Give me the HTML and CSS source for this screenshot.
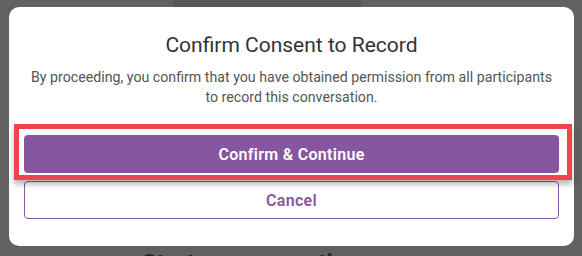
FILE: index.html
```html
<!DOCTYPE html>
<html>
<head>
<meta charset="utf-8">
<link rel="stylesheet" href="styles.css">
</head>
<body>
<div class="page">
  <div class="top-strip"><div class="top-card"></div></div>
  <h2 class="behind-heading">Start a conversation</h2>
</div>
<div class="dialog">
  <h1 class="title">Confirm Consent to Record</h1>
  <p class="message">By proceeding, you confirm that you have obtained permission from all participants to record this conversation.</p>
  <div class="actions">
    <button class="btn btn-primary">Confirm &amp; Continue</button>
    <button class="btn btn-outline">Cancel</button>
  </div>
  <div class="highlight"></div>
</div>
</body>
</html>
```
FILE: styles.css
```css
* { box-sizing: border-box; }
html, body {
  margin: 0;
  width: 582px;
  height: 256px;
  overflow: hidden;
  background: #616161;
  font-family: Roboto, "Liberation Sans", sans-serif;
}
.page {
  position: relative;
  height: 256px;
  overflow: hidden;
}
.top-strip {
  display: flex;
  padding-left: 173px;
}
.top-card {
  width: 188px;
  height: 8px;
  background: #59595d;
  border-bottom: 3px solid #555559;
}
.behind-heading {
  margin: 0;
  position: absolute;
  top: 248px;
  left: 142px;
  font-size: 24px;
  line-height: 30px;
  font-weight: 700;
  color: #2a2a2a;
  white-space: nowrap;
}
.dialog {
  position: absolute;
  left: 9px;
  top: 7px;
  width: 565px;
  height: 239px;
  background: #fff;
  border-radius: 10px;
  padding: 26px 15px 0;
  text-align: center;
}
.title {
  margin: 0;
  font-size: 21px;
  line-height: 24px;
  font-weight: 400;
  color: #333;
}
.message {
  margin: 10px auto 0;
  max-width: 528px;
  font-size: 14.2px;
  line-height: 20px;
  color: #555;
}
.actions {
  margin-top: 28px;
  display: flex;
  flex-direction: column;
  gap: 8px;
}
.btn {
  height: 38px;
  border-radius: 4px;
  font-family: Roboto, "Liberation Sans", sans-serif;
  font-size: 16px;
  font-weight: 600;
  letter-spacing: 0.3px;
}
.btn-primary {
  background: #8657a0;
  color: #fff;
  border: none;
}
.btn-outline {
  background: #fff;
  color: #8657a0;
  border: 1px solid #8657a0;
}
.highlight {
  position: absolute;
  left: 5px;
  top: 117px;
  width: 558px;
  height: 56px;
  border: 5px solid #f4424a;
  box-shadow: 0 4px 6px rgba(0,0,0,0.3);
  pointer-events: none;
}
```
